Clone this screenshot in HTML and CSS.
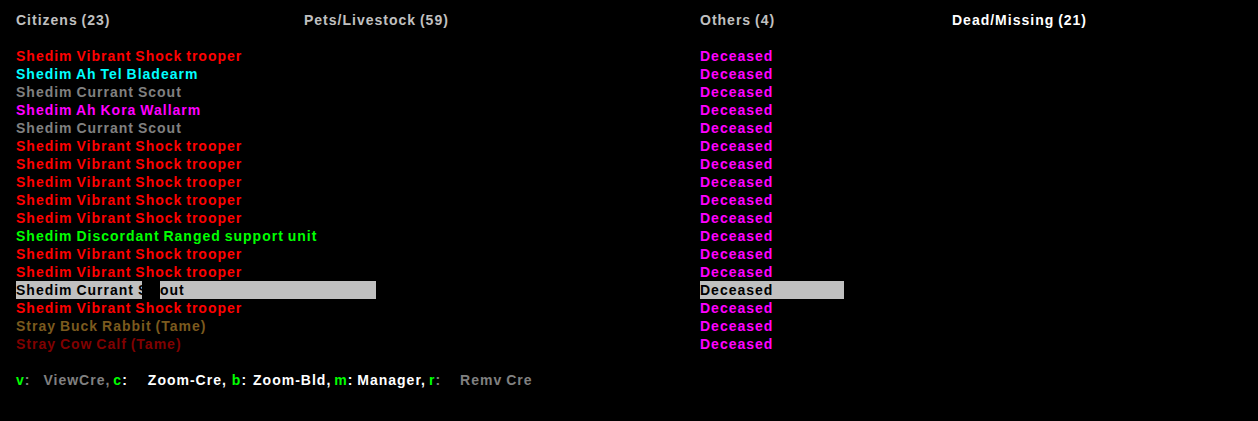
FILE: index.html
```html
<!DOCTYPE html>
<html>
<head>
<meta charset="utf-8">
<link rel="stylesheet" href="styles.css">
</head>
<body>
<div class="screen">
  <div class="tabs">
    <span class="tab">Citizens (23)</span>
    <span class="tab">Pets/Livestock (59)</span>
    <span class="tab">Others (4)</span>
    <span class="tab active">Dead/Missing (21)</span>
  </div>
  <div class="list">
    <div class="row"><span class="name red">Shedim Vibrant Shock trooper</span><span class="status">Deceased</span></div>
    <div class="row"><span class="name cyan">Shedim Ah Tel Bladearm</span><span class="status">Deceased</span></div>
    <div class="row"><span class="name gray">Shedim Currant Scout</span><span class="status">Deceased</span></div>
    <div class="row"><span class="name magenta">Shedim Ah Kora Wallarm</span><span class="status">Deceased</span></div>
    <div class="row"><span class="name gray">Shedim Currant Scout</span><span class="status">Deceased</span></div>
    <div class="row"><span class="name red">Shedim Vibrant Shock trooper</span><span class="status">Deceased</span></div>
    <div class="row"><span class="name red">Shedim Vibrant Shock trooper</span><span class="status">Deceased</span></div>
    <div class="row"><span class="name red">Shedim Vibrant Shock trooper</span><span class="status">Deceased</span></div>
    <div class="row"><span class="name red">Shedim Vibrant Shock trooper</span><span class="status">Deceased</span></div>
    <div class="row"><span class="name red">Shedim Vibrant Shock trooper</span><span class="status">Deceased</span></div>
    <div class="row"><span class="name green">Shedim Discordant Ranged support unit</span><span class="status">Deceased</span></div>
    <div class="row"><span class="name red">Shedim Vibrant Shock trooper</span><span class="status">Deceased</span></div>
    <div class="row"><span class="name red">Shedim Vibrant Shock trooper</span><span class="status">Deceased</span></div>
    <div class="row selected">
      <span class="name sel-name"><span class="sel-a">Shedim Currant S</span><span class="sel-gap"></span><span class="sel-b">out</span></span>
      <span class="status sel-status">Deceased</span>
    </div>
    <div class="row"><span class="name red">Shedim Vibrant Shock trooper</span><span class="status">Deceased</span></div>
    <div class="row"><span class="name brown">Stray Buck Rabbit (Tame)</span><span class="status">Deceased</span></div>
    <div class="row"><span class="name dred">Stray Cow Calf (Tame)</span><span class="status">Deceased</span></div>
  </div>
  <div class="footer">
    <span class="key">v</span><span class="dim">:</span><span class="lbl dim l-view">ViewCre,</span>
    <span class="key k-c">c</span><span>:</span><span class="lbl l-zc">Zoom-Cre,</span>
    <span class="key k-b">b</span><span>:</span><span class="lbl l-zb">Zoom-Bld,</span>
    <span class="key k-m">m</span><span>: Manager,</span>
    <span class="key k-r">r</span><span class="dim">:</span><span class="lbl dim l-rc">Remv Cre</span>
  </div>
</div>
</body>
</html>
```

FILE: styles.css
```css
html, body {
  margin: 0;
  padding: 0;
  background: #000;
}
body {
  width: 1258px;
  height: 421px;
  overflow: hidden;
  font-family: "Liberation Sans", Arial, sans-serif;
  font-weight: bold;
  font-size: 14px;
  letter-spacing: 1px;
  word-spacing: -1px;
  line-height: 18px;
  color: #c0c0c0;
}
.screen {
  padding: 11px 16px 0 16px;
}
.tabs {
  display: grid;
  grid-template-columns: 288px 396px 252px 1fr;
  height: 18px;
  margin-bottom: 18px;
  white-space: nowrap;
}
.tab { color: #c0c0c0; }
.tab.active { color: #fff; }
.list {
  display: flex;
  flex-direction: column;
}
.row {
  display: grid;
  grid-template-columns: 684px 1fr;
  height: 18px;
  white-space: nowrap;
}
.name { display: block; }
.status { color: #ff00ff; }
.red { color: #ff0000; }
.cyan { color: #00ffff; }
.gray { color: #808080; }
.magenta { color: #ff00ff; }
.green { color: #00ff00; }
.brown { color: #7b5a1e; }
.dred { color: #800000; }

.sel-name {
  display: flex;
  width: 360px;
  color: #000;
}
.sel-a {
  width: 126px;
  overflow: hidden;
  background: #c0c0c0;
}
.sel-gap {
  width: 18px;
  background: #000;
}
.sel-b {
  flex: 1;
  background: #c0c0c0;
}
.sel-status {
  width: 144px;
  background: #c0c0c0;
  color: #000;
}

.footer {
  display: flex;
  margin-top: 18px;
  height: 18px;
  white-space: nowrap;
  color: #fff;
}
.key { color: #00ff00; }
.dim { color: #808080; }
.l-view { margin-left: 13px; }
.k-c { margin-left: 3px; }
.l-zc { margin-left: 20px; }
.k-b { margin-left: 5px; }
.l-zb { margin-left: 6px; }
.k-m { margin-left: 3px; }
.k-r { margin-left: 3px; }
.l-rc { margin-left: 19px; }
```
